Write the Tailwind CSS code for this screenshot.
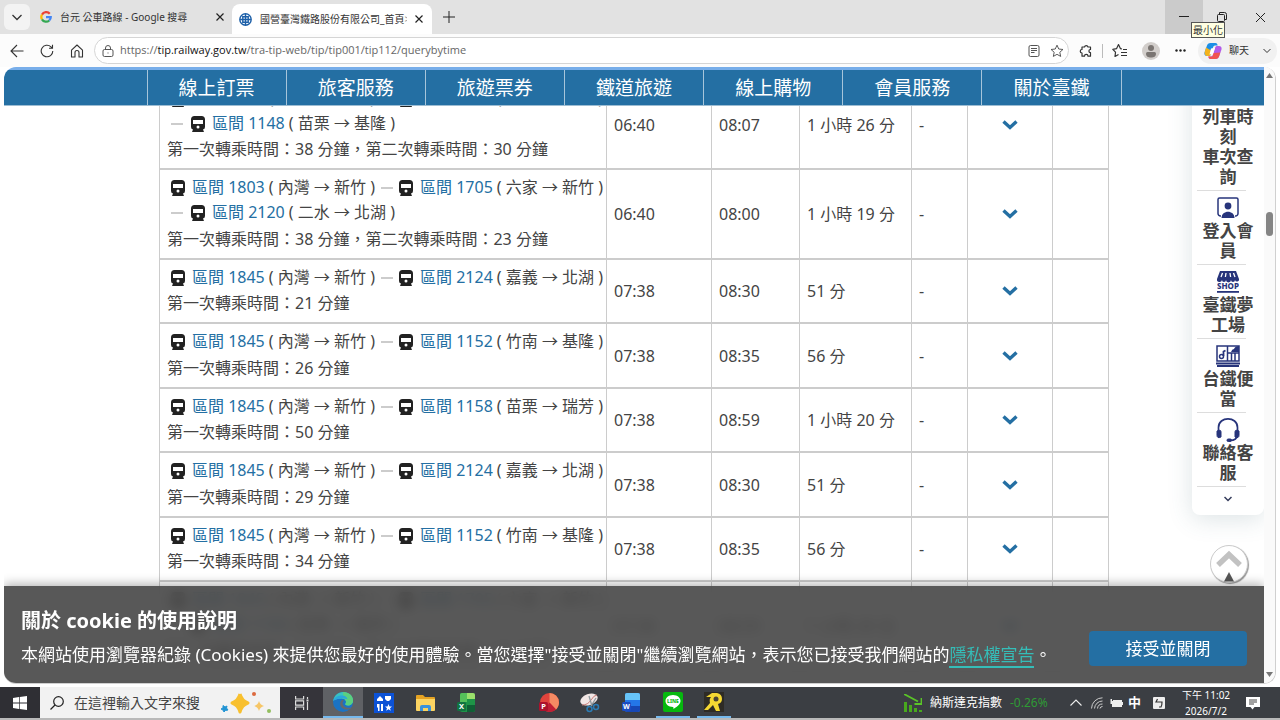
<!DOCTYPE html>
<html lang="zh-Hant">
    <head>
        <meta charset="UTF-8" />
        <title>國營臺灣鐵路股份有限公司_首頁</title>
        <script src="https://cdn.jsdelivr.net/npm/@tailwindcss/browser@4"></script>
    </head>
    <body class="flex h-screen flex-col overflow-hidden bg-white font-['Noto_Sans','Noto_Sans_CJK_TC',sans-serif] text-[#333]">
        <!-- tab strip -->
        <header class="flex h-[34px] shrink-0 bg-[#e2e2e2] text-[10px]">
            <button aria-label="分頁動作" class="mt-1 ml-1 flex size-[26px] items-center justify-center rounded-md bg-[#f3f3f3]">
                <svg class="size-3" viewBox="0 0 12 12" fill="none" stroke="#333" stroke-width="1.3"><path d="M1.5 4 6 8.500l4.500-4.500" /></svg>
            </button>
            <div class="flex w-[202px] items-center gap-2 pl-[10px]">
                <svg class="size-3 shrink-0" viewBox="0 0 24 24" fill="none" stroke-width="4.500">
                    <path d="M19.500 5.500A9.500 9.500 0 0 0 4 7.200" stroke="#ea4335" />
                    <path d="M4 7.200a9.500 9.500 0 0 0 0 9.600" stroke="#fbbc05" />
                    <path d="M4 16.800a9.500 9.500 0 0 0 14.500 2.200" stroke="#34a853" />
                    <path d="M18.500 19c2-1.800 3-4.200 3-7H12" stroke="#4285f4" />
                </svg>
                <span class="grow whitespace-nowrap">台元 公車路線 - Google 搜尋</span>
                <button aria-label="關閉分頁" class="mr-2">
                    <svg class="size-2" viewBox="0 0 8 8" stroke="#222" stroke-width="1.2"><path d="m.5.5 7 7m0-7-7 7" /></svg>
                </button>
            </div>
            <div class="mt-1 flex w-[200px] items-center gap-2 rounded-t-lg bg-white pl-[7px]">
                <svg class="size-[13px] shrink-0" viewBox="0 0 24 24" fill="none" stroke="#1c5fa8" stroke-width="2.600">
                    <circle cx="12" cy="12" r="10.500" /><path d="M12 2v20M7 7h10v10H7zM2 12h20" />
                </svg>
                <span class="w-[147px] overflow-hidden whitespace-nowrap">國營臺灣鐵路股份有限公司_首頁<span class="text-[#999]">&gt;</span></span>
                <button aria-label="關閉分頁">
                    <svg class="size-2" viewBox="0 0 8 8" stroke="#222" stroke-width="1.2"><path d="m.5.5 7 7m0-7-7 7" /></svg>
                </button>
            </div>
            <button aria-label="新分頁" class="px-[11px]">
                <svg class="size-3" viewBox="0 0 12 12" stroke="#222"><path d="M6 0v12M0 6h12" /></svg>
            </button>
            <div class="ml-auto flex">
                <div class="relative flex">
                    <button aria-label="最小化" class="flex w-[38px] items-center justify-center bg-[#cbcbcb]">
                        <svg class="size-[10px]" viewBox="0 0 10 10" stroke="#222"><path d="M0 4.500h10" /></svg>
                    </button>
                    <span class="absolute top-[22px] left-[26px] z-10 border border-[#555] bg-[#ffffe1] px-px text-[10px] leading-[14px] whitespace-nowrap">最小化</span>
                </div>
                <button aria-label="還原" class="flex w-[38px] items-center justify-center">
                    <svg class="size-[10px]" viewBox="0 0 10 10" fill="none" stroke="#222"><rect x=".5" y="2.500" width="7" height="7" rx="1" /><path d="M2.500 2V.5h5a2 2 0 0 1 2 2v5H8" /></svg>
                </button>
                <button aria-label="關閉" class="flex w-[39px] items-center justify-center">
                    <svg class="size-[9px]" viewBox="0 0 9 9" stroke="#222"><path d="m0 0 9 9m0-9L0 9" /></svg>
                </button>
            </div>
        </header>

        <!-- address bar -->
        <div class="flex h-[33px] shrink-0 items-center bg-[#fcfcfc] pl-2 text-[11px]">
            <button aria-label="上一頁" class="w-[30px] pl-[2px]">
                <svg class="size-[14px]" viewBox="0 0 14 14" fill="none" stroke="#333" stroke-width="1.1"><path d="M13.500 7H1m6-6L1 7l6 6" /></svg>
            </button>
            <button aria-label="重新整理" class="w-[30px] pl-[2px]">
                <svg class="size-[14px]" viewBox="0 0 14 14" fill="none" stroke="#333" stroke-width="1.1"><path d="M12.800 7A5.800 5.800 0 1 1 11 2.800l1.500 1.500M12.500.8v3.500H9" /></svg>
            </button>
            <button aria-label="首頁" class="w-[26px] pl-[2px]">
                <svg class="size-[14px]" viewBox="0 0 14 14" fill="none" stroke="#333" stroke-width="1.1" stroke-linejoin="round"><path d="M1.500 6.200 7 1l5.500 5.200V13H9V8.500a2 2 0 0 0-4 0V13H1.500z" /></svg>
            </button>
            <div class="flex h-[27px] grow items-center rounded-full border border-[#d5d5d5] bg-white pr-1 pl-[7px]">
                <svg class="mr-[6px] size-3" viewBox="0 0 12 12" fill="none" stroke="#555"><rect x="1" y="4.500" width="10" height="7" rx="1.500" /><path d="M3.500 4.500V3a2.500 2.500 0 0 1 5 0v1.500M6 7.500v1" /></svg>
                <span class="grow font-['Open_Sans',sans-serif] text-[#666]">https://<span class="text-[#111]">tip.railway.gov.tw</span>/tra-tip-web/tip/tip001/tip112/querybytime</span>
                <button aria-label="沉浸式閱讀程式" class="mr-[10px]">
                    <svg class="size-3" viewBox="0 0 12 12" fill="none" stroke="#555"><rect x="1" y=".5" width="10" height="11" rx="1.500" /><path d="M3 3.500h6M3 5.500h6M3 7.500h3.500" /></svg>
                </button>
                <button aria-label="加入我的最愛">
                    <svg class="size-[14px]" viewBox="0 0 24 24" fill="none" stroke="#444" stroke-width="1.500" stroke-linejoin="round"><path d="m12 2 3 6.600 7.200.8-5.400 4.800 1.500 7.100-6.300-3.600-6.300 3.600 1.500-7.100L1.800 9.400 9 8.600z" /></svg>
                </button>
            </div>
            <button aria-label="擴充功能" class="ml-[10px]">
                <svg class="size-[14px]" viewBox="0 0 14 14" fill="none" stroke="#333" stroke-width="1.200" stroke-linejoin="round"><path d="M3 3h2.500a1.800 1.800 0 0 1 3.500 0h2.500v2.500a1.600 1.600 0 0 0 0 3.200v3.500H9a1.700 1.700 0 0 0-3.500 0H3V9a1.700 1.700 0 0 1 0-3.500z" /></svg>
            </button>
            <span class="mx-[9px] h-[14px] w-px bg-[#bbb]"></span>
            <button aria-label="我的最愛">
                <svg class="size-4" viewBox="0 0 16 16" fill="none" stroke="#333" stroke-width="1.200" stroke-linejoin="round"><path d="M10 6 8.500 5.700 6.500 1.500l-2 4.200L.8 6.300l2.700 2.900L3 13.500l3.500-2M9 9.500h6M9 12.500h6M11 6.500h4" /></svg>
            </button>
            <button aria-label="個人資料" class="ml-[14px]">
                <svg class="size-[18px]" viewBox="0 0 18 18"><circle cx="9" cy="9" r="9" fill="#d2cecb" /><circle cx="9" cy="6" r="3" fill="#7a7572" /><path d="M4 11.500q0-1.500 1.500-1.500h7q1.500 0 1.500 1.500c0 3-2 4-5 4s-5-1-5-4" fill="#7a7572" /></svg>
            </button>
            <button aria-label="設定及其他" class="mr-3 ml-[15px]">
                <svg class="h-[3px] w-[11px]" viewBox="0 0 11 3" fill="#222"><circle cx="1.500" cy="1.500" r="1.200" /><circle cx="5.500" cy="1.500" r="1.200" /><circle cx="9.500" cy="1.500" r="1.200" /></svg>
            </button>
            <button class="mr-[3px] flex h-[26px] w-[79px] items-center rounded-full bg-[#f1f1f1] pl-[6px] text-[10px]">
                <svg class="mr-[7px] size-[18px]" viewBox="0 0 18 18">
                    <path d="M6.500 1h5c1.500 0 1.800 1 2.200 2.500H11c-1.200 0-1.800 1-2.200 2.500L7 12c-.5 1.500-1 2-2.500 2H3c-2 0-3-1.500-2.500-3.500L2.800 4C3.400 2 4.500 1 6.500 1" fill="#1b8ee6" />
                    <path d="M2 5.500 1 9c-.8 2.500 0 5 2.500 5h1C6 14 6.500 13.500 7 12l.8-3z" fill="#f3b21b" />
                    <path d="M11.500 17h-5c-1.500 0-1.800-1-2.200-2.500H7c1.200 0 1.800-1 2.200-2.500L11 6c.5-1.500 1-2 2.500-2H15c2 0 3 1.500 2.500 3.500L15.200 14c-.6 2-1.700 3-3.700 3" fill="#b35be8" />
                    <path d="m8.500 14.500 1-3.500 6.800-.5-1.100 3.500c-.6 2-1.700 3-3.700 3h-5c-1.500 0-1.800-1-2.200-2.500z" fill="#f0544f" />
                    <path d="m7 6.500 4-.5-2 6-3.500.5z" fill="#fff" />
                </svg>
                <span class="grow text-left">聊天</span>
                <svg class="mr-[6px] size-2" viewBox="0 0 8 8" fill="none" stroke="#333"><path d="m.5 2 3.500 3.500L7.500 2" /></svg>
            </button>
        </div>

        <!-- page viewport -->
        <div class="mx-1 mb-[3px] flex min-h-0 grow overflow-hidden rounded-xl border-r border-b border-[#d0d0d0]">
            <div class="relative flex min-w-0 grow flex-col overflow-hidden border-t-3 border-[#78aeea]">
                <nav class="relative z-20 flex h-9 shrink-0 justify-center border-b border-[#9dbdd3] bg-[#246fa3]">
                    <ul id="menu" class="flex w-[975px] border-r border-white/60"></ul>
                </nav>
                <main class="-mt-[27px] flex min-h-0 grow flex-col items-center">
                    <table class="w-[949px] table-fixed border-collapse text-[#444]">
                        <colgroup>
                            <col class="w-[447px]" /><col class="w-[105px]" /><col class="w-[88px]" /><col class="w-[112px]" /><col class="w-[56px]" /><col class="w-[85px]" /><col class="w-[56px]" />
                        </colgroup>
                        <tbody id="trains"></tbody>
                    </table>
                </main>

                <!-- quick links -->
                <aside class="absolute top-0 right-0 w-[72px] rounded-b-lg bg-white pt-[37px] pb-2 text-center text-[17px] leading-5 font-bold text-[#444] shadow-[0_4px_24px_rgba(60,100,110,0.18)]">
                    <a href="#" class="block px-[10px] pb-[3px]">列車時刻<br />車次查詢</a>
                    <a href="#" class="relative block px-[10px] pt-[6px] pb-[3px]">
                        <span class="absolute top-0 left-[5px] w-[49px] border-t border-[#ddd]"></span>
                        <svg class="mx-auto mb-[1px] h-6 w-[22px]" viewBox="0 0 22 24" fill="none" stroke="#27347b" stroke-width="1.500"><path d="M4 20H3.500a2.500 2.500 0 0 1-2.500-2.500V3.500A1.500 1.500 0 0 1 2.500 2h17A1.500 1.500 0 0 1 21 3.500v14a2.500 2.500 0 0 1-2.500 2.500H18" /><circle cx="11" cy="10" r="3.400" fill="#27347b" stroke="none" /><path d="M4.500 22c0-8.500 13-8.500 13 0z" fill="#27347b" stroke="none" /></svg>
                        登入會員
                    </a>
                    <a href="#" class="relative block px-[10px] pt-[6px] pb-[3px]">
                        <span class="absolute top-0 left-[5px] w-[49px] border-t border-[#ddd]"></span>
                        <svg class="mx-auto mb-[1px] h-6 w-[22px]" viewBox="0 0 22 24" fill="#27347b"><path d="M3 1h16l3 8a2 2 0 0 1-4 1 2 2 0 0 1-4 0 2 2 0 0 1-5 0 2 2 0 0 1-4 0 2 2 0 0 1-5-1z" /><path d="m5.500 3-1.500 4M9 3l-.6 4M13 3l.6 4M16.500 3 18 7" stroke="#fff" stroke-width="1.300" /><text x="11" y="19" text-anchor="middle" font-family="Noto Sans" font-size="8" font-weight="800">SHOP</text><path d="M0 21h22v1.800H0z" /></svg>
                        臺鐵夢工場
                    </a>
                    <a href="#" class="relative block px-[10px] pt-[6px] pb-[3px]">
                        <span class="absolute top-0 left-[5px] w-[49px] border-t border-[#ddd]"></span>
                        <svg class="mx-auto mb-[1px] h-6 w-[24px]" viewBox="0 0 24 24" fill="none" stroke="#27347b" stroke-width="1.500"><path d="M1 2h22v15H1zM11.500 2v15M11.500 9h11.500M15.500 9v8M19 9v8" /><path d="M15 8q1-3 3-3 1-3 5-3v6z" fill="#27347b" stroke="none" /><circle cx="5.500" cy="12.500" r="2" /><path d="M7.500 12V7.500l2-1M0 19.500h24M1 22h22" stroke-width="1.800" /></svg>
                        台鐵便當
                    </a>
                    <a href="#" class="relative block px-[10px] pt-[6px] pb-[3px]">
                        <span class="absolute top-0 left-[5px] w-[49px] border-t border-[#ddd]"></span>
                        <svg class="mx-auto mb-[1px] h-6 w-[24px]" viewBox="0 0 24 24" fill="none" stroke="#27347b" stroke-width="1.700"><path d="M2.500 14V9.500C2.500-2 21.500-2 21.500 9.500V14M21 17c0 4-3 5.500-7 5.500" /><path d="M1 13q4-2 4 1v5q-4 2-4-2zM23 13q-4-2-4 1v5q4 2 4-2z" fill="#27347b" stroke-width="1" /><rect x="11" y="21" width="4.500" height="2.500" rx="1.200" fill="#27347b" stroke-width="1" /></svg>
                        聯絡客服
                    </a>
                    <button aria-label="更多" class="relative block w-full pt-[9px] pb-1">
                        <span class="absolute top-0 left-[5px] w-[49px] border-t border-[#ddd]"></span>
                        <svg class="mx-auto size-[8px]" viewBox="0 0 8 8" fill="none" stroke="#333a5a" stroke-width="1.500"><path d="m.5 2 3.500 3.500L7.500 2" /></svg>
                    </button>
                </aside>

                <!-- back to top -->
                <button aria-label="回頂端" class="absolute right-[16px] bottom-[100px] size-[38px] rounded-full border border-[#ccc] bg-white shadow-[1px_1px_1px_#999]">
                    <svg class="size-full" viewBox="0 0 36 36" fill="none"><path d="M7 19 18 8.500 29 19" stroke="#c2c2c2" stroke-width="5.500" /><path d="m18 26 5 9.500H13z" fill="#555" /></svg>
                </button>

                <!-- cookie notice -->
                <section class="absolute inset-x-0 bottom-0 z-30 flex h-[97px] items-center bg-[#464646]/90 pr-[17px] pl-[17px] text-white shadow-[0_-2px_10px_rgba(0,0,0,0.3)] backdrop-blur-[6px]">
                    <div class="grow pt-2 whitespace-nowrap">
                        <h2 class="text-[20px] leading-8 font-bold">關於 cookie 的使用說明</h2>
                        <p class="text-[17px] leading-9">本網站使用瀏覽器紀錄 (Cookies) 來提供您最好的使用體驗。當您選擇"接受並關閉"繼續瀏覽網站，表示您已接受我們網站的<a href="#" class="border-b-2 border-[#35bdb8] text-[#35bdb8]">隱私權宣告</a>。</p>
                    </div>
                    <button class="mt-[28px] h-[35px] w-[158px] shrink-0 rounded-sm bg-[#246fa3] text-[17px]">接受並關閉</button>
                </section>
            </div>
            <!-- scrollbar -->
            <div class="flex w-[11px] shrink-0 flex-col items-center bg-[#fafafa] py-[6px]">
                <svg class="h-[5px] w-[7px]" viewBox="0 0 7 5" fill="#777"><path d="M3.500 0 7 5H0z" /></svg>
                <div class="mt-[134px] h-6 w-[7px] rounded-full bg-[#858585]"></div>
                <svg class="mt-auto h-[5px] w-[7px]" viewBox="0 0 7 5" fill="#777"><path d="M3.500 5 7 0H0z" /></svg>
            </div>
        </div>

        <!-- taskbar -->
        <footer class="flex h-[33px] shrink-0 border-b-2 border-[#b9b9b9] bg-[#3b3e43] text-[12px] text-white">
            <button aria-label="開始" class="flex w-10 items-center justify-center bg-[#2f2f34]">
                <svg class="size-[14px]" viewBox="0 0 14 14" fill="#fff"><path d="m0 2 6-1v5.600H0zM6.700.9 14 0v6.600H6.700zM0 7.400h6V13l-6-1zM6.700 7.400H14V14l-7.300-.9z" /></svg>
            </button>
            <label class="flex w-60 items-center bg-[#f2f2f2] pl-[10px]">
                <svg class="size-[14px] shrink-0" viewBox="0 0 14 14" fill="none" stroke="#222" stroke-width="1.200"><circle cx="8.500" cy="5.500" r="4.800" /><path d="M5 9 .5 13.500" /></svg>
                <input type="text" aria-label="搜尋" placeholder="在這裡輸入文字來搜" class="ml-[10px] w-[130px] text-[14px] text-[#444] placeholder:text-[#444]" />
                <svg class="ml-4 h-6 w-[52px]" viewBox="0 0 52 24"><path d="M20 3q2 7 8 9-6 2-8 9-2-7-8-9 6-2 8-9" fill="#f8c02f" stroke="#f8c02f" stroke-width="3" stroke-linejoin="round" /><path d="M39 10q1 4 5 5-4 1-5 5-1-4-5-5 4-1 5-5" fill="#f6c667" /><path d="M3 14.500 5 16l2-1-.5 2L8 19l-2.500.5L4 21l-1-2-2-1 2-1z" fill="#2294d4" stroke="#2294d4" /><circle cx="34" cy="3" r="2" fill="#dc6a3f" /><circle cx="49" cy="20" r="2" fill="#93bf5f" /></svg>
            </label>
            <button aria-label="工作檢視" class="flex w-[43px] items-center justify-center bg-[#35343a]">
                <svg class="size-[14px]" viewBox="0 0 14 14" fill="none" stroke="#ddd" stroke-width="1.200"><path d="M.6 0v3h8V0M.6 14v-3h8v3M.6 4.800h8v4.400h-8zM12.500 1v2M12.500 6v8" /><path d="M11.500 3.500h2v2h-2z" fill="#ddd" stroke="none" /></svg>
            </button>
            <button aria-label="Microsoft Edge" class="flex w-10 items-center justify-center border-b-2 border-[#76b9ed] bg-[#5f6165]">
                <svg class="size-5" viewBox="0 0 20 20"><circle cx="10" cy="10" r="10" fill="#1b73c4" /><path d="M.2 9C1 3.500 5 0 10 0c6 0 10 4 10 8.500 0 3.200-2.500 5-5 5-2 0-3-.8-2.600-1.700 1.600-2 .2-5.300-3.400-5.300C5 6.500 1.500 7.500.2 9" fill="#39c3c0" /><path d="M10 0c6 0 10 4 10 8.500 0 3.200-2.500 5-5 5-2 0-3-.8-2.600-1.700 1.600-2 .2-5.300-3.400-5.300C11 3 10 1 10 0" fill="#5bd07f" /><path d="M9 6.500C4 6.500 1 8 .2 9c1-4 4.800-5.500 8.800-5.500 3 0 5 1.500 5.500 4-1-1-3-1-5.500-1" fill="#2aa7dc" /><path d="M9 8c-3 2.500-2.500 8 3 9.500 2.800.5 5.500-.7 6.800-2.300-2.800 1.300-6.800.6-8.200-1.500C9.300 12 9 10 11 8.700 10.500 8 9.800 7.700 9 8" fill="#66686c" /></svg>
            </button>
            <button aria-label="小工具" class="flex w-[42px] items-center justify-center">
                <svg class="size-5" viewBox="0 0 20 20"><rect width="20" height="20" fill="#0c52d6" /><path d="M3 8h6V6L6 3 3 6zM11 3h6v3l-2 2h-2l-2-2zM3 11v3l1 1v3h1.500v-7zM7 11h2v7H7zM14.500 11l1 2.500H18l-2 1.700.8 2.600-2.300-1.500-2.300 1.500.8-2.600-2-1.700h2.500z" fill="#fff" /></svg>
            </button>
            <button aria-label="檔案總管" class="flex w-10 items-center justify-center">
                <svg class="h-4 w-[19px]" viewBox="0 0 19 16"><path d="M0 1q0-1 1-1h6l2 2h9q1 0 1 1v12H0z" fill="#e5a323" /><path d="M0 4h19v11q0 1-1 1H1q-1 0-1-1z" fill="#fcd462" /><path d="M4 16v-4q0-2 2-2h7q2 0 2 2v4h-3v-3H7v3z" fill="#3a92dc" /></svg>
            </button>
            <button aria-label="Excel" class="flex w-[42px] items-center justify-center">
                <svg class="h-[19px] w-[18px]" viewBox="0 0 18 19"><rect x="3" width="15" height="19" rx="2" fill="#1e9447" /><path d="M10 0h6q2 0 2 2v4h-8z" fill="#9be06c" /><path d="M5 0h5v9H3V2q0-2 2-2" fill="#55c05a" /><path d="M10 12h8v5q0 2-2 2h-6z" fill="#105f35" /><rect y="9" width="9" height="9" rx="1.500" fill="#127340" /><text x="4.500" y="16.200" text-anchor="middle" fill="#fff" font-family="Noto Sans" font-size="7.500" font-weight="700">X</text></svg>
            </button>
            <button aria-label="PowerPoint" class="ml-[42px] flex w-10 items-center justify-center">
                <svg class="size-5" viewBox="0 0 20 20"><circle cx="10.500" cy="9.500" r="9.500" fill="#e0433c" /><path d="M10.500 0A9.500 9.500 0 0 1 20 9.500c0 3-1.500 5.500-3 7l-6.500-7z" fill="#f58a63" /><path d="M10.500 9.500 17 16.500A9.500 9.500 0 0 1 5 17z" fill="#bf1f35" /><rect y="9" width="9" height="9" rx="1.500" fill="#ab122c" /><text x="4.500" y="16.200" text-anchor="middle" fill="#fff" font-family="Noto Sans" font-size="7.500" font-weight="700">P</text></svg>
            </button>
            <button aria-label="剪取工具" class="flex w-[42px] items-center justify-center">
                <svg class="size-5" viewBox="0 0 20 20" fill="none"><ellipse cx="9" cy="6.500" rx="9" ry="5.500" fill="#f1e6e5" transform="rotate(-20 9 6.500)" /><path d="M2 12q6 0 9-5t6-5" stroke="#c87b76" /><path d="m9 3 3 10M16 5l-5 8" stroke="#8e989e" stroke-width="1.300" /><circle cx="9.500" cy="16" r="2.500" stroke="#2b7cb5" stroke-width="1.500" /><circle cx="16" cy="14" r="2.500" stroke="#2b7cb5" stroke-width="1.500" /></svg>
            </button>
            <button aria-label="Word" class="flex w-10 items-center justify-center">
                <svg class="h-[19px] w-[18px]" viewBox="0 0 18 19"><rect x="3" width="15" height="19" rx="2" fill="#2476e8" /><path d="M5 0h11q2 0 2 2v5H3V2q0-2 2-2" fill="#67c4f8" /><path d="M3 13h15v4q0 2-2 2H5q-2 0-2-2z" fill="#1747b5" /><rect y="9" width="9" height="9" rx="1.500" fill="#1b4bc0" /><text x="4.500" y="16" text-anchor="middle" fill="#fff" font-family="Noto Sans" font-size="7" font-weight="700">W</text></svg>
            </button>
            <button aria-label="LINE" class="mx-[5px] flex w-[34px] items-center justify-center border-b-2 border-[#76b9ed]">
                <svg class="size-5" viewBox="0 0 20 20"><rect width="20" height="20" rx="2" fill="#06b80e" /><path d="M10 3c4.500 0 7.500 2.800 7.500 6 0 3.500-4.500 6.500-7 8 0-1 0-1.700-.5-2-4.500 0-7.500-2.800-7.500-6S5.500 3 10 3" fill="#fff" /><text x="10" y="11" text-anchor="middle" fill="#06b80e" font-family="Noto Sans" font-size="5" font-weight="800">LINE</text></svg>
            </button>
            <button aria-label="PotPlayer" class="ml-[2px] flex w-[34px] items-center justify-center border-b-2 border-[#76b9ed]">
                <svg class="size-5" viewBox="0 0 20 20"><rect width="20" height="20" fill="#2e2b25" /><path d="M2 5 8 1h5q5 1 5 6 0 4-4 5l2 7h-4L9 13l-5 5H0l6-7q-1-4 1-6z" fill="#f5d832" /><circle cx="12" cy="7" r="2.500" fill="#4a4436" /></svg>
            </button>
            <div class="ml-auto flex items-center">
                <svg class="size-[18px]" viewBox="0 0 18 18" fill="#48a81d"><path d="M0 8h3v10H0zM5 11h3v7H5zM10 14h3v4h-3zM15 16h3v2h-3z" /><path d="m0 0 14 7.500M17.500 4v6h-7" fill="none" stroke="#5ac428" stroke-width="1.800" /></svg>
                <span class="ml-2">納斯達克指數</span>
                <span class="ml-2 w-[44px] text-[#2f9a35]">-0.26%</span>
                <button aria-label="顯示隱藏的圖示" class="ml-4">
                    <svg class="h-[7px] w-3" viewBox="0 0 12 7" fill="none" stroke="#eee" stroke-width="1.100"><path d="m.5 6.500 5.500-5.500 5.500 5.500" /></svg>
                </button>
                <svg class="ml-[9px] size-3" viewBox="0 0 12 12" fill="none" stroke="#ccc"><path d="M.5 11.500A11 11 0 0 1 11.500.8M3.500 11.500a8 8 0 0 1 8-7.500M6.500 11.500a5 5 0 0 1 5-4.500M9 11.500a2.500 2.500 0 0 1 2.500-2" /></svg>
                <svg class="ml-[6px] h-[10px] w-[14px]" viewBox="0 0 14 10" fill="#eee"><path d="M4 2h9v7H3V6H1.500V1H3v2h1z" /><path d="M13 4h1v3h-1z" /></svg>
                <span class="ml-[5px] text-[13px] font-bold">中</span>
                <svg class="ml-3 size-3" viewBox="0 0 12 12"><rect width="12" height="12" rx="1" fill="#eee" /><path d="M4.500 2 3 5h6q0 4-1 5H6" fill="none" stroke="#333" stroke-width="1.200" /></svg>
                <time class="ml-[14px] w-[54px] text-center text-[10px] leading-4 whitespace-nowrap">下午 11:02<br />2026/7/2</time>
                <button aria-label="通知" class="mr-5 ml-[13px]">
                    <svg class="size-[14px]" viewBox="0 0 14 14"><path d="M0 1h14v10H8.500L6.500 13.500 4.500 11H0z" fill="#fff" /><path d="M3 4h8M3 6h8M3 8h5" stroke="#444" /></svg>
                </button>
            </div>
        </footer>

        <template id="leg-template">
            <span class="flex items-center">
                <svg class="h-4 w-[14px]" viewBox="0 0 14 16"><path d="M3.500 0h7Q14 0 14 3.500V11q0 2-2 2.500l1 2.500H1l1-2.500Q0 13 0 11V3.500Q0 0 3.500 0" fill="#222" /><path d="M2 4h10v4H2z" fill="#fff" /><circle cx="7" cy="11" r="1.500" fill="#fff" /></svg>
                <a href="#" class="ml-[7px] text-[#246fa3]"></a>
                <span class="ml-1"></span>
            </span>
        </template>
    </body>
    <script>
        const menu = ["線上訂票", "旅客服務", "旅遊票券", "鐵道旅遊", "線上購物", "會員服務", "關於臺鐵"];
        document.getElementById("menu").innerHTML = menu.map((name) =>
            `<li class="flex-1 border-l border-white/60"><a href="#" class="block pt-[2px] text-center text-[19px] leading-[33px] text-white">${name}</a></li>`
        ).join("");

        // legs: [train, from, to]
        const neiwan = ["1845", "內灣", "新竹"];
        const trains = [
            { legs: [["1803", "內灣", "新竹"], ["1705", "六家", "新竹"], ["1148", "苗栗", "基隆"]], wait: [38, 30], dep: "06:40", arr: "08:07", time: "1 小時 26 分" },
            { legs: [["1803", "內灣", "新竹"], ["1705", "六家", "新竹"], ["2120", "二水", "北湖"]], wait: [38, 23], dep: "06:40", arr: "08:00", time: "1 小時 19 分" },
            { legs: [neiwan, ["2124", "嘉義", "北湖"]], wait: [21], dep: "07:38", arr: "08:30", time: "51 分" },
            { legs: [neiwan, ["1152", "竹南", "基隆"]], wait: [26], dep: "07:38", arr: "08:35", time: "56 分" },
            { legs: [neiwan, ["1158", "苗栗", "瑞芳"]], wait: [50], dep: "07:38", arr: "08:59", time: "1 小時 20 分" },
            { legs: [neiwan, ["2124", "嘉義", "北湖"]], wait: [29], dep: "07:38", arr: "08:30", time: "51 分" },
            { legs: [neiwan, ["1152", "竹南", "基隆"]], wait: [34], dep: "07:38", arr: "08:35", time: "56 分" },
            { legs: [neiwan, ["1705", "六家", "新竹"], ["1158", "苗栗", "瑞芳"]], wait: [38, 23], dep: "07:38", arr: "08:59", time: "1 小時 20 分" },
        ];
        const legTemplate = document.getElementById("leg-template");
        const dash = '<span class="mx-[6px] h-[2px] w-3 bg-[#ccc]"></span>';
        const order = ["第一次", "第二次"];
        const cell = "border-x border-[#ccc] px-[7px]";

        trains.forEach((t) => {
            const row = document.createElement("tr");
            row.className = "group border-y-2 border-[#ccc]";
            const wait = t.wait.map((m, i) => `${order[i]}轉乘時間：${m} 分鐘`).join("，");
            row.innerHTML = `
                <td class="border-x border-[#ccc] py-[5px] pl-[7px] whitespace-nowrap">
                    <div class="legs flex flex-wrap pl-1 leading-[25px]"></div>
                    <div class="leading-7 group-odd:leading-[27px]">${wait}</div>
                </td>
                <td class="${cell}">${t.dep}</td>
                <td class="${cell}">${t.arr}</td>
                <td class="${cell}">${t.time}</td>
                <td class="${cell}">-</td>
                <td class="${cell}">
                    <button aria-label="展開" class="mx-auto block"><svg class="h-[10px] w-4" viewBox="0 0 16 10" fill="none" stroke="#246fa3" stroke-width="3.400"><path d="m1.500 1.500 6.500 6 6.500-6" /></svg></button>
                </td>
                <td class="${cell}"></td>`;
            const legs = row.querySelector(".legs");
            t.legs.forEach(([no, from, to], i) => {
                const leg = legTemplate.content.cloneNode(true).firstElementChild;
                leg.querySelector("a").textContent = `區間 ${no}`;
                leg.lastElementChild.textContent = `( ${from} → ${to} )`;
                if (i > 0) {
                    leg.insertAdjacentHTML("afterbegin", dash);
                }
                // a third leg opens its own line
                if (i == 2) {
                    leg.firstElementChild.classList.replace("mx-[6px]", "mr-2");
                }
                legs.appendChild(leg);
            });
            document.getElementById("trains").appendChild(row);
        });
    </script>
</html>
